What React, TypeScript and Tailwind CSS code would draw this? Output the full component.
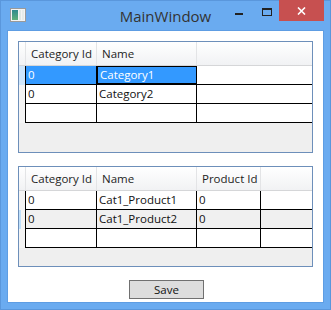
import React from "react";

const FONT = { fontFamily: '"Open Sans", "Noto Sans", sans-serif' };

function HeaderCell({ w, text, last }: { w?: string; text?: string; last?: boolean }) {
  return (
    <div
      className={`${w ?? "flex-1"} h-full flex items-center pl-[5px] text-[11.5px] text-[#1e1e1e] ${
        last ? "" : "border-r border-[#e3e4e6]"
      }`}
    >
      {text}
    </div>
  );
}

type Cell = { w: string; text?: string; sel?: boolean; focus?: boolean };

function Row({ cells, bg, rh }: { cells: Cell[]; bg?: string; rh?: string }) {
  return (
    <div className={`flex h-[19px] ${bg ?? "bg-white"}`}>
      <div className={`w-[6px] h-full ${rh ?? "bg-[#f4f4f4]"}`} />
      <div className="flex-1 flex border-b border-black border-l">
        {cells.map((c, i) => (
          <div
            key={i}
            className={`${c.w} h-full flex items-center text-[11.5px] border-r border-black ${
              c.sel ? "bg-[#3399ff] text-white" : "text-[#111]"
            } ${c.focus ? "outline outline-1 outline-black -outline-offset-1 pl-[3px]" : "pl-[2px]"}`}
          >
            {c.text}
          </div>
        ))}
        <div className="flex-1" />
      </div>
    </div>
  );
}

function Grid({
  height,
  headers,
  rows,
}: {
  height: string;
  headers: { w: string; text: string }[];
  rows: { cells: Cell[]; bg?: string; rh?: string }[];
}) {
  return (
    <div className={`mx-[10px] ${height} border border-[#6d8fba] bg-[#efefef] flex flex-col`}>
      <div className="h-[24px] flex bg-gradient-to-b from-white to-[#f1f2f4] border-b border-[#d5d6d8]">
        <div className="w-[7px] h-full border-r border-[#e3e4e6]" />
        {headers.map((h, i) => (
          <HeaderCell key={i} w={h.w} text={h.text} />
        ))}
        <HeaderCell last />
      </div>
      {rows.map((r, i) => (
        <Row key={i} cells={r.cells} bg={r.bg} rh={r.rh} />
      ))}
    </div>
  );
}

function AppIcon() {
  return (
    <svg width="16" height="14" viewBox="0 0 16 14">
      <rect x="0.5" y="0.5" width="15" height="13" fill="#f4f4f4" stroke="#9a9a9a" />
      <rect x="2" y="2" width="6" height="10" fill="url(#g)" />
      <rect x="9" y="2" width="2" height="10" fill="#dfe8e4" />
      <rect x="12" y="2" width="2" height="10" fill="#e6ece9" />
      <defs>
        <linearGradient id="g" x1="0" y1="0" x2="0" y2="1">
          <stop offset="0" stopColor="#2f8a8f" />
          <stop offset="1" stopColor="#5fb07a" />
        </linearGradient>
      </defs>
    </svg>
  );
}

export default function App() {
  const w1 = "w-[71px]";
  const w2 = "w-[100px]";
  const w3 = "w-[64px]";
  return (
    <div
      className="w-[331px] h-[310px] bg-[#6aabf0] border border-[#5a97dc] flex flex-col"
      style={FONT}
    >
      <div className="h-[29px] flex items-start relative">
        <div className="absolute left-[9px] top-[7px]">
          <AppIcon />
        </div>
        <div className="absolute inset-x-0 top-[4px] text-center text-[15px] text-[#333]">MainWindow</div>
        <div className="absolute left-[234px] top-[12px] w-[8px] h-[2px] bg-[#222]" />
        <div className="absolute left-[261px] top-[7px] w-[10px] h-[8px] border border-[#222] border-t-2" />
        <div className="absolute left-[278px] top-[-1px] w-[45px] h-[21px] bg-[#c75050] flex items-center justify-center">
          <svg width="9" height="8" viewBox="0 0 9 8">
            <path d="M1 0.5 L8 7.5 M8 0.5 L1 7.5" stroke="white" strokeWidth="1.6" />
          </svg>
        </div>
      </div>
      <div className="mx-[6px] mb-[6px] flex-1 bg-white border border-[#5e9de3] flex flex-col">
        <div className="h-[10px]" />
        <Grid
          height="h-[112px]"
          headers={[
            { w: w1, text: "Category Id" },
            { w: w2, text: "Name" },
          ]}
          rows={[
            {
              rh: "bg-[#cfe6fb]",
              cells: [
                { w: w1, text: "0", sel: true },
                { w: w2, text: "Category1", sel: true, focus: true },
              ],
            },
            { cells: [{ w: w1, text: "0" }, { w: w2, text: "Category2" }] },
            { cells: [{ w: w1 }, { w: w2 }] },
          ]}
        />
        <div className="h-[13px]" />
        <Grid
          height="h-[101px]"
          headers={[
            { w: w1, text: "Category Id" },
            { w: w2, text: "Name" },
            { w: w3, text: "Product Id" },
          ]}
          rows={[
            { cells: [{ w: w1, text: "0" }, { w: w2, text: "Cat1_Product1" }, { w: w3, text: "0" }] },
            {
              bg: "bg-[#f0f0f0]",
              rh: "bg-[#f4f4f4] border-l-2 border-[#bfe0fb]",
              cells: [{ w: w1, text: "0" }, { w: w2, text: "Cat1_Product2" }, { w: w3, text: "0" }],
            },
            { cells: [{ w: w1 }, { w: w2 }, { w: w3 }] },
          ]}
        />
        <div className="h-[13px]" />
        <div className="flex pl-[121px]">
          <button className="w-[75px] h-[19px] bg-[#dddddd] border border-[#707070] text-[11.5px] text-[#111] flex items-center justify-center">
            Save
          </button>
        </div>
      </div>
    </div>
  );
}
